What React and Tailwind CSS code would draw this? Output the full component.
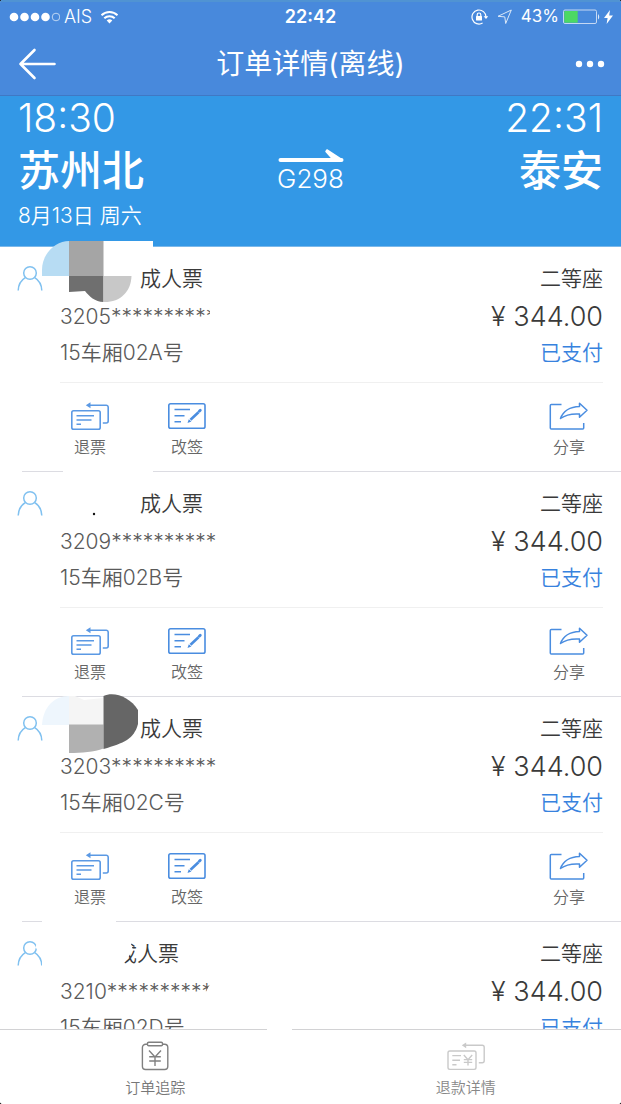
const tickets = [
  { id: "3205**********", seat: "15车厢02A号" },
  { id: "3209**********", seat: "15车厢02B号" },
  { id: "3203**********", seat: "15车厢02C号" },
  { id: "3210**********", seat: "15车厢02D号" },
];

const WifiIcon = () => (
  <svg width="19" height="14" viewBox="0 0 18 14" fill="none" stroke="#fff" strokeWidth="2">
    <path d="M1 5.2a11.4 11.4 0 0 1 16 0" />
    <path d="M3.8 8.3a7.4 7.4 0 0 1 10.4 0" />
    <path d="M9 13.5 6.2 10.6a4 4 0 0 1 5.6 0z" fill="#fff" stroke="none" />
  </svg>
);

const RotationLockIcon = () => (
  <svg width="18" height="16" viewBox="0 0 18 16" fill="none" stroke="#fff" strokeWidth="1.2">
    <path d="M11.6 14A7 7 0 1 1 15 8" />
    <path d="M12.6 7.2h4.6L15 10z" fill="#fff" stroke="none" />
    <path d="M6.2 7.5V5.8a1.8 1.8 0 0 1 3.6 0v1.7" />
    <rect x="5" y="7" width="6" height="4.5" rx="0.5" fill="#fff" stroke="none" />
  </svg>
);

const LocationIcon = () => (
  <svg width="16" height="16" viewBox="0 0 16 16" fill="none" stroke="#dbe8f8" strokeWidth="1">
    <path d="M14.3 1 1 7.3l6.8.6.9 6.6z" strokeLinejoin="round" />
  </svg>
);

const BatteryIcon = () => (
  <svg width="37" height="16" viewBox="0 0 37 16" fill="none">
    <rect x="0.5" y="1" width="33" height="13.5" rx="1.5" stroke="#c5d8f3" />
    <rect x="1.3" y="2" width="13.4" height="11.7" fill="#4cd964" />
    <path d="M35 5.2c1.6.6 1.6 4.6 0 5.2z" fill="#dbe8f8" />
  </svg>
);

const PersonIcon = () => (
  <svg width="26" height="27" viewBox="0 0 26 27" fill="none" stroke="#80c1f0" strokeWidth="1.5">
    <circle cx="13" cy="8" r="6.3" />
    <path d="M1.2 25.5C1.4 19.6 4 15.2 8.3 12.6M24.8 25.5c-.2-5.9-2.8-10.3-7.1-12.9" />
  </svg>
);

const RefundIcon = () => (
  <svg width="40" height="28" viewBox="0 0 40 28" fill="none" stroke="#5b99e4" strokeWidth="1.6">
    <rect x="1.8" y="8.8" width="28.4" height="18.4" rx="1.8" />
    <path d="M18 3.2h18.2a2 2 0 0 1 2 2V19a2 2 0 0 1-2 2h-3.4" />
    <path d="M20.5.2v6L15.8 3.2z" fill="#5b99e4" stroke="none" />
    <path d="M6.5 13.7h17.5M6.5 18h15M6.5 22.3h4.5" />
  </svg>
);

const ChangeIcon = () => (
  <svg width="40" height="28" viewBox="0 0 40 28" fill="none" stroke="#4a8de0" strokeWidth="1.6">
    <rect x="1.8" y="1.8" width="36.2" height="24.4" rx="1.8" />
    <path d="M7.5 7.5h15.5M7.5 13.7h10M7.5 19.8h6.5" />
    <path d="m23.5 17.8 8-7.5" strokeWidth="2.6" />
    <path d="m32.3 9.3 1-1" strokeWidth="2.8" strokeLinecap="round" />
    <path d="m20.5 21 1.3-3.8 2.6 2.3z" fill="#4a8de0" stroke="none" />
  </svg>
);

const ShareIcon = () => (
  <svg width="40" height="28" viewBox="0 0 40 28" fill="none" stroke="#4a8de0" strokeWidth="1.5">
    <path d="M12.5 2.5H2.3a1 1 0 0 0-1 1V26a1 1 0 0 0 1 1h31.4a1 1 0 0 0 1-1v-5" />
    <path d="M11.5 16.5C14 9.5 21 4.8 30.5 4.5V1.3l7.5 7-7.5 7V12c-8-.6-13.5.5-19 4.5z" strokeLinejoin="round" />
  </svg>
);

const TrackIcon = () => (
  <svg width="30" height="30" viewBox="0 0 30 30" fill="none" stroke="#808080" strokeWidth="1.4">
    <path d="M7.5 3.2H5.6a3.2 3.2 0 0 0-3.2 3.2v18.9a3.2 3.2 0 0 0 3.2 3.2h19a3.2 3.2 0 0 0 3.2-3.2V6.4a3.2 3.2 0 0 0-3.2-3.2h-1.9" />
    <rect x="7.5" y="1.2" width="15" height="3.6" rx="1.2" />
    <path d="m9 9.5 6 6.5 6-6.5M15 16v9M9.2 15.8h11.6M9.2 20h11.6" />
  </svg>
);

const RefundDetailIcon = () => (
  <svg width="40" height="30" viewBox="0 0 40 30" fill="none" stroke="#c9c9c9" strokeWidth="1.4">
    <rect x="2" y="10" width="28" height="18.4" rx="1.8" />
    <path d="M18 4.2h18.2a2 2 0 0 1 2 2v13.6a2 2 0 0 1-2 2h-3.4" />
    <path d="M20.2 1.4v5.8l-4.4-2.9z" fill="#c9c9c9" stroke="none" />
    <path d="M6.3 14.6h8.7M6.3 19.2h7.7M6.3 23.8h4.2" />
    <path d="m17.8 14 4.2 4.6 4.2-4.6M22 18.6v6M17.8 18.6h8.4M17.8 21.4h8.4" />
  </svg>
);

// Smudges that hide the passenger names
const Redaction = ({ index }) => {
  if (index === 0) {
    return (
      <svg className="absolute left-[42px] -top-[6px]" width="178" height="90" viewBox="0 0 178 90">
        <path d="M61 0h50v20H96v42H27V6h34z" fill="#fff" />
        <path d="M0 35V29C0 12 14 0 27 0v35z" fill="#b7dcf3" />
        <path d="M27 0h34.5v35H27z" fill="#a5a5a5" />
        <path d="M27 35h34.5v26C53 61 47 55 43 50l-16 1z" fill="#6f6f6f" />
        <path d="M61.5 35H89.5C89 51 78 61.5 61.5 61z" fill="#c8c8c8" />
        <path d="M168 62h10v22h-10z" fill="#fff" />
      </svg>
    );
  }
  if (index === 1) {
    return (
      <svg className="absolute left-[42px] -top-[6px]" width="112" height="54" viewBox="0 0 112 54">
        <path d="M21 0h90v8H21z" fill="#fff" />
        <circle cx="52" cy="48" r="1.2" fill="#111" />
      </svg>
    );
  }
  if (index === 2) {
    return (
      <svg className="absolute left-[42px] -top-[4px]" width="98" height="62" viewBox="0 0 98 62">
        <path d="M0 32C1 14 12 3 27 3v29z" fill="#eef6fd" />
        <path d="M27 3l6 0 9 4 19-2v27H27z" fill="#f5f5f5" />
        <path d="M27 31.5h34.5v24C52 59 40 60 27 60z" fill="#b1b1b1" />
        <path d="M61.5 3C72-2 88 4 96 17v14C92 46 82 50 61.5 56z" fill="#666" />
      </svg>
    );
  }
  return (
    <svg className="absolute left-[35px] -top-[6px]" width="180" height="90" viewBox="0 0 180 90">
      <path d="M7 0h74v20h17l-2 8 2 6-8 12-8 4H7V35L0 32l2-5 5-1z" fill="#fff" />
      <path d="M170 84v-6l8-16h2v22z" fill="#fff" />
    </svg>
  );
};

const ActionButton = ({ icon, label }) => (
  <button type="button" className="flex w-[60px] flex-col items-center gap-[5px] text-base leading-6 font-[350] text-[#666]">
    {icon}
    {label}
  </button>
);

const TicketCard = ({ ticket, index }) => (
  <li className="relative flex shrink-0 gap-[17px] bg-white pl-[17px]">
    <div className="pt-[18px]">
      <PersonIcon />
    </div>
    <div className="flex-1">
      <div className="mr-[18px] flex justify-between border-b border-[#f0f0f0] pt-[14px] pb-[11px] text-[21px] leading-9 font-[350]">
        <div className="text-[#5a5a5a]">
          <p className={index === 3 ? "mb-0.5 pl-14 text-[#3a3a3a]" : "mb-0.5 pl-20 text-[#3a3a3a]"}>成人票</p>
          <p>{ticket.id}</p>
          <p>{ticket.seat}</p>
        </div>
        <div className="text-right">
          <p className="mb-0.5 text-[#3a3a3a]">二等座</p>
          <p className="text-[27px] text-[#3a3a3a]">¥ 344.00</p>
          <p className="text-[#3782de]">已支付</p>
        </div>
      </div>
      <div className="mr-[22px] flex gap-[37px] pt-[19px] pb-[13px]">
        <ActionButton icon={<RefundIcon />} label="退票" />
        <ActionButton icon={<ChangeIcon />} label="改签" />
        <div className="ml-auto">
          <ActionButton icon={<ShareIcon />} label="分享" />
        </div>
      </div>
    </div>
    <div className="absolute right-0 bottom-0 left-[22px] border-b border-[#dcdce2]" />
    <Redaction index={index} />
  </li>
);

const App = () => {
  return (
    <div className="h-screen bg-black">
      <div className="flex h-full flex-col overflow-hidden rounded-[3px] bg-white font-['Inter','Noto_Sans_CJK_SC',sans-serif]">
        <header className="border-b border-[#4078c4] bg-[#4889dc] text-white">
          <div className="grid h-8 grid-cols-3 items-center border-t-2 border-[#5093d3] px-2 text-[17px]">
            <div className="flex items-center gap-2">
              <svg width="52" height="10" viewBox="0 0 52 10" fill="#fff">
                <circle cx="6" cy="5" r="4.3" />
                <circle cx="16.5" cy="5" r="4.3" />
                <circle cx="27" cy="5" r="4.3" />
                <circle cx="37.5" cy="5" r="4.3" />
                <circle cx="48" cy="5" r="3.8" fill="none" stroke="#dbe8f8" strokeWidth="0.8" />
              </svg>
              <span className="-ml-1 text-lg font-light">AIS</span>
              <WifiIcon />
            </div>
            <p className="text-center text-lg font-semibold">22:42</p>
            <div className="flex items-center justify-end gap-2">
              <RotationLockIcon />
              <LocationIcon />
              <div className="flex items-center gap-1">
                <span>43%</span>
                <BatteryIcon />
                <svg width="9" height="14" viewBox="0 0 9 14" fill="#fff">
                  <path d="M6 0 0 8h3.6L2.6 14 9 5.6H5.2z" />
                </svg>
              </div>
            </div>
          </div>
          <div className="flex h-[63px] items-center justify-between px-4">
            <button type="button" aria-label="返回" className="w-10">
              <svg width="40" height="32" viewBox="0 0 40 32" fill="none" stroke="#fff" strokeWidth="2.6" strokeLinecap="round" strokeLinejoin="round">
                <path d="M18.5 2 4.5 16l14 14M4.5 16h34" />
              </svg>
            </button>
            <h1 className="text-[28px] leading-9">订单详情(离线)</h1>
            <button type="button" aria-label="更多" className="flex w-10 justify-end">
              <svg width="30" height="8" viewBox="0 0 30 8" fill="#fff">
                <circle cx="4" cy="4" r="3.2" />
                <circle cx="15" cy="4" r="3.2" />
                <circle cx="26" cy="4" r="3.2" />
              </svg>
            </button>
          </div>
        </header>

        {/* Journey summary */}
        <section className="grid grid-cols-3 border-b border-[#7bb8ea] bg-[#3398e6] px-[18px] pb-4 text-white">
          <div>
            <p className="text-[39px] leading-[44px] font-[350]">18:30</p>
            <p className="text-[42px] leading-[62px] font-medium">苏州北</p>
            <p className="text-[21px] leading-7 font-[350]">8月13日 周六</p>
          </div>
          <div className="flex flex-col items-center pt-[52px]">
            <svg width="66" height="14" viewBox="0 0 66 14" fill="none" stroke="#fff" strokeWidth="4" strokeLinecap="round">
              <path d="M2.5 12h61" />
              <path d="M49 2 62 10.500v2h-6L48 3.500z" fill="#fff" strokeWidth="1.500" strokeLinejoin="round" />
            </svg>
            <p className="text-[26px] leading-[34px] font-light">G298</p>
          </div>
          <div className="text-right">
            <p className="text-[39px] leading-[44px] font-[350]">22:31</p>
            <p className="text-[42px] leading-[62px] font-medium">泰安</p>
          </div>
        </section>

        <main className="relative min-h-0 flex-1">
          <div className="h-full [clip-path:inset(-6px_0_0_0)]">
            <ul className="flex flex-col">
              {tickets.map((ticket, index) => (
                <TicketCard key={ticket.id} ticket={ticket} index={index} />
              ))}
            </ul>
          </div>
        </main>

        <footer className="relative flex border-t border-[#d2d2d4] bg-white text-[15px] leading-6 font-[350]">
          <span className="absolute -top-px left-[43%] w-[4%] border-t border-white" />
          <button type="button" className="flex flex-1 flex-col items-center gap-[5px] pt-[11px] pb-1 text-[#777]">
            <TrackIcon />
            订单追踪
          </button>
          <button type="button" className="flex flex-1 flex-col items-center gap-[5px] pt-[11px] pb-1 text-[#888]">
            <RefundDetailIcon />
            退款详情
          </button>
        </footer>
      </div>
    </div>
  );
};

export default App;
